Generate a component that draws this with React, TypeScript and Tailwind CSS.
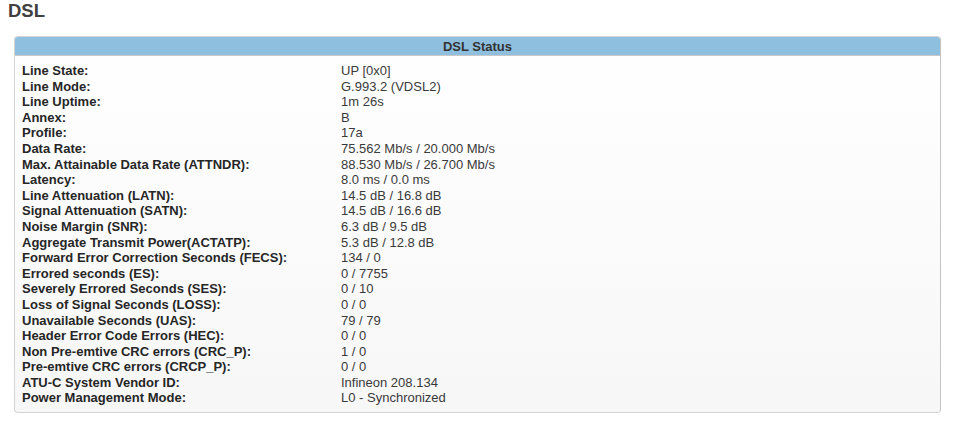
const rows: [string, string][] = [
  ["Line State:", "UP [0x0]"],
  ["Line Mode:", "G.993.2 (VDSL2)"],
  ["Line Uptime:", "1m 26s"],
  ["Annex:", "B"],
  ["Profile:", "17a"],
  ["Data Rate:", "75.562 Mb/s / 20.000 Mb/s"],
  ["Max. Attainable Data Rate (ATTNDR):", "88.530 Mb/s / 26.700 Mb/s"],
  ["Latency:", "8.0 ms / 0.0 ms"],
  ["Line Attenuation (LATN):", "14.5 dB / 16.8 dB"],
  ["Signal Attenuation (SATN):", "14.5 dB / 16.6 dB"],
  ["Noise Margin (SNR):", "6.3 dB / 9.5 dB"],
  ["Aggregate Transmit Power(ACTATP):", "5.3 dB / 12.8 dB"],
  ["Forward Error Correction Seconds (FECS):", "134 / 0"],
  ["Errored seconds (ES):", "0 / 7755"],
  ["Severely Errored Seconds (SES):", "0 / 10"],
  ["Loss of Signal Seconds (LOSS):", "0 / 0"],
  ["Unavailable Seconds (UAS):", "79 / 79"],
  ["Header Error Code Errors (HEC):", "0 / 0"],
  ["Non Pre-emtive CRC errors (CRC_P):", "1 / 0"],
  ["Pre-emtive CRC errors (CRCP_P):", "0 / 0"],
  ["ATU-C System Vendor ID:", "Infineon 208.134"],
  ["Power Management Mode:", "L0 - Synchronized"],
];

export default function App() {
  return (
    <div className="w-[954px] h-[426px] bg-white font-['Liberation_Sans',Arial,sans-serif] text-[#333]">
      <h2 className="pl-[8px] pt-[0px] text-[18.5px] leading-[22px] font-bold text-[#404040]">DSL</h2>
      <div className="mt-[14px] ml-[14px] w-[927px] rounded-[4px] border border-[#d4d4d4] border-r-[#c4c4c4] bg-gradient-to-b from-white to-[#f7f7f7] overflow-hidden">
        <div className="h-[19px] bg-[#8fbfdf] border-b border-[#c8c8c8] text-center text-[13px] leading-[19px] font-bold text-[#333]">
          DSL Status
        </div>
        <div className="pl-[7px] pt-[7px] pb-[6px]">
          {rows.map(([label, value]) => (
            <div key={label} className="flex text-[13px] leading-[15.6px]">
              <span className="w-[319px] font-bold text-[#262626]">{label}</span>
              <span className="text-[#3a3a3a]">{value}</span>
            </div>
          ))}
        </div>
      </div>
    </div>
  );
}
